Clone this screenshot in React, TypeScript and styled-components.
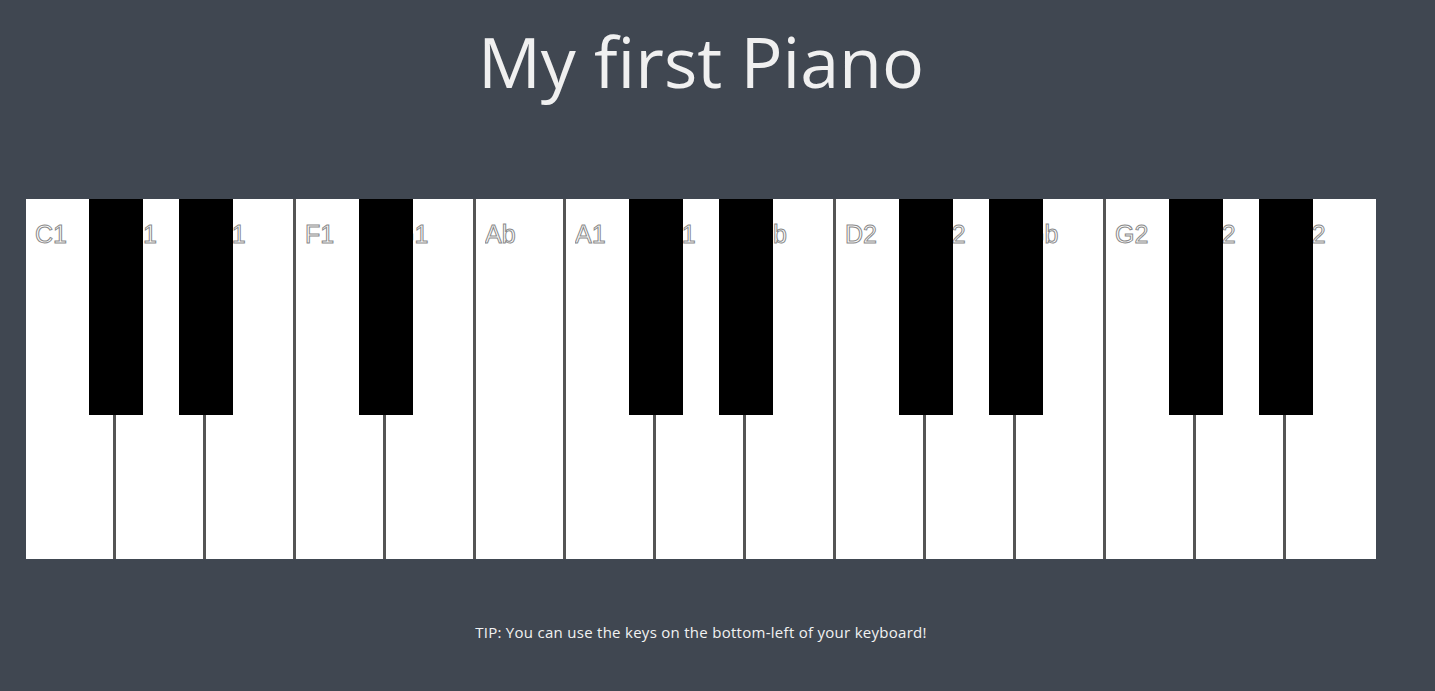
import React from "react";
import styled, { createGlobalStyle } from "styled-components";

const GlobalStyle = createGlobalStyle`
  html, body {
    margin: 0;
    padding: 0;
    background: #404751;
  }
  body {
    font-family: "Open Sans", "Liberation Sans", sans-serif;
    overflow: hidden;
  }
`;

const Page = styled.main`
  width: 1402px;
  height: 691px;
  padding: 0 26px;
  box-sizing: border-box;
  display: flex;
  flex-direction: column;
  align-items: center;
`;

const Title = styled.h1`
  margin: 13px 0 0;
  font-family: "Open Sans", sans-serif;
  font-weight: 400;
  font-size: 70px;
  line-height: 96px;
  letter-spacing: 0;
  color: #f0f0f0;
`;

const Keyboard = styled.div`
  margin-top: 90px;
  width: 1350px;
  height: 360px;
  display: flex;
`;

const WhiteKey = styled.div<{ $last?: boolean }>`
  position: relative;
  width: 90px;
  height: 100%;
  background: #ffffff;
  border-right: ${(p) => (p.$last ? "none" : "3px solid #555555")};
  padding: 21px 0 0 9px;
  box-sizing: border-box;
  flex: none;
`;

const Label = styled.span`
  display: block;
  width: 36px;
  overflow: hidden;
  white-space: nowrap;
  font-family: "Liberation Sans", Arial, sans-serif;
  font-size: 25px;
  line-height: 28px;
  color: #ffffff;
  -webkit-text-stroke: 1px #8a8a8a;
`;

const BlackKey = styled.div`
  position: absolute;
  z-index: 1;
  top: 0;
  right: -30px;
  width: 54px;
  height: 216px;
  background: #000000;
`;

const Tip = styled.p`
  margin: 64px 0 0;
  font-family: "Open Sans", sans-serif;
  font-size: 15px;
  line-height: 18px;
  color: #f2f2f2;
  letter-spacing: 0.28px;
`;

const keys = [
  { label: "C1", black: true },
  { label: "D1", black: true },
  { label: "E1", black: false },
  { label: "F1", black: true },
  { label: "G1", black: false },
  { label: "Ab", black: false },
  { label: "A1", black: true },
  { label: "B1", black: true },
  { label: "Db", black: false },
  { label: "D2", black: true },
  { label: "E2", black: true },
  { label: "Gb", black: false },
  { label: "G2", black: true },
  { label: "A2", black: true },
  { label: "B2", black: false },
];

export default function App() {
  return (
    <>
      <GlobalStyle />
      <Page>
        <Title>My first Piano</Title>
        <Keyboard>
          {keys.map((k, i) => (
            <WhiteKey key={i} $last={i === keys.length - 1}>
              <Label>{k.label}</Label>
              {k.black && <BlackKey />}
            </WhiteKey>
          ))}
        </Keyboard>
        <Tip>TIP: You can use the keys on the bottom-left of your keyboard!</Tip>
      </Page>
    </>
  );
}
